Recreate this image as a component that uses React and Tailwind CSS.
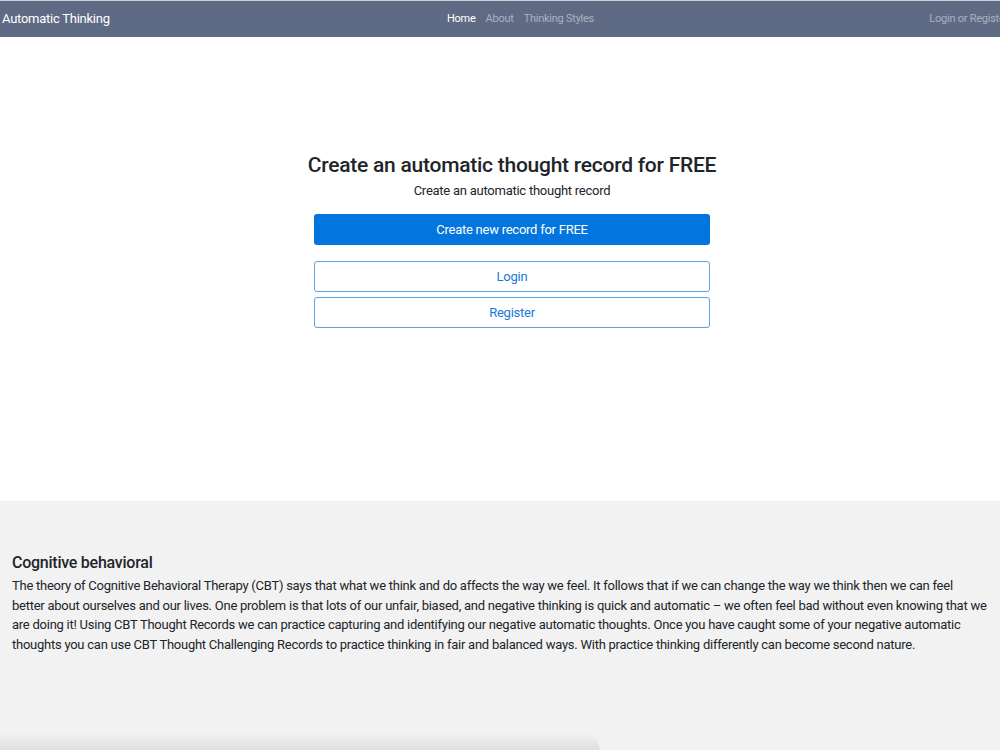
import React from "react";

export default function App() {
    return (
        <div className="min-h-[750px] bg-white text-[#212529] font-['Roboto',sans-serif] tracking-[-0.25px] overflow-hidden">
            <nav className="border-t border-[#c9ccd3] bg-[#5f6b85] h-[37px] flex items-center relative">
                <a className="text-[13px] text-white pl-[2px]">Automatic Thinking</a>
                <div className="absolute left-[447px] top-0 h-full flex items-center gap-[10px] text-[11px]">
                    <a className="text-white">Home</a>
                    <a className="text-[#aab1c1]">About</a>
                    <a className="text-[#aab1c1]">Thinking Styles</a>
                </div>
                <div className="ml-auto text-[11px] text-[#aab1c1] whitespace-nowrap mr-[-8px]">Login or Register</div>
            </nav>

            <section className="h-[464px] flex flex-col items-center pt-[115px] pl-[24px]">
                <h1 className="text-[21px] font-medium leading-[26px]">Create an automatic thought record for FREE</h1>
                <p className="text-[13px] mt-[3px] leading-[20px]">Create an automatic thought record</p>
                <div className="w-[396px] mt-[13px] flex flex-col">
                    <button className="h-[31px] rounded-[3px] bg-[#0275de] text-white text-[13px]">
                        Create new record for FREE
                    </button>
                    <button className="h-[31px] mt-[16px] rounded-[3px] border border-[#5fa0e0] text-[#1a7ad8] text-[13px]">
                        Login
                    </button>
                    <button className="h-[31px] mt-[5px] rounded-[3px] border border-[#5fa0e0] text-[#1a7ad8] text-[13px]">
                        Register
                    </button>
                </div>
            </section>

            <section className="bg-[#f2f2f2] h-[250px] relative px-[12px] pt-[51px]">
                <h2 className="text-[16px] font-medium leading-[22px]">Cognitive behavioral</h2>
                <p className="text-[13px] leading-[19.5px] mt-[2px]">
                    The theory of Cognitive Behavioral Therapy (CBT) says that what we think and do affects the way we feel. It follows that if we can change the way we think then we can feel better about ourselves and our lives. One problem is that lots of our unfair, biased, and negative thinking is quick and automatic – we often feel bad without even knowing that we are doing it! Using CBT Thought Records we can practice capturing and identifying our negative automatic thoughts. Once you have caught some of your negative automatic thoughts you can use CBT Thought Challenging Records to practice thinking in fair and balanced ways. With practice thinking differently can become second nature.
                </p>
                <div className="absolute left-0 bottom-0 w-[600px] h-[18px] bg-gradient-to-b from-transparent to-[#dedede] rounded-tr-[20px]"></div>
            </section>
        </div>
    );
}
